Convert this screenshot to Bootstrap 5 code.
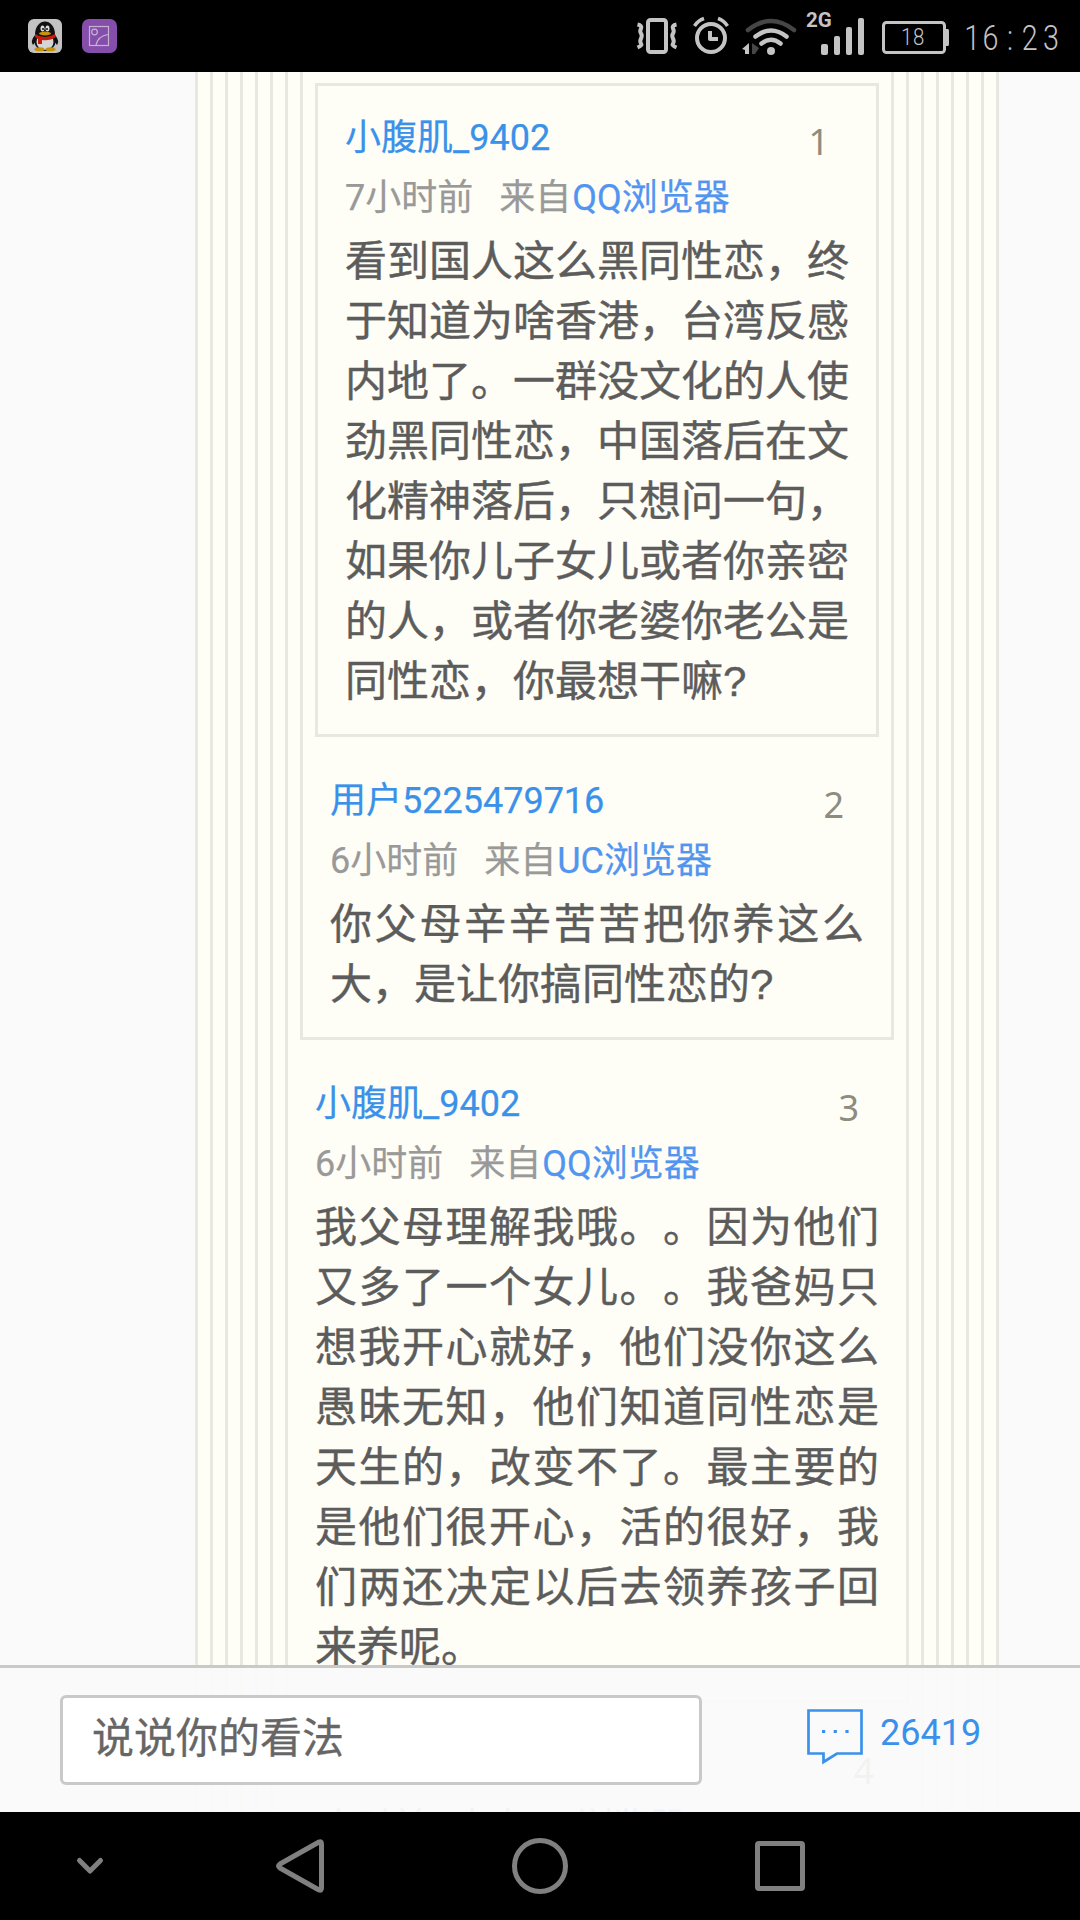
<!DOCTYPE html>
<html lang="zh-CN">
<head>
<meta charset="utf-8">
<meta name="viewport" content="width=device-width, initial-scale=1">
<title>评论</title>
<link href="https://cdn.jsdelivr.net/npm/bootstrap@5.3.0/dist/css/bootstrap.min.css" rel="stylesheet">
<style>
body{width:1080px;height:1920px;overflow:hidden;background:#fafafa;font-family:Roboto,"Noto Sans CJK SC",sans-serif}
svg{display:block;flex:none}
.status-bar{height:72px;padding-left:28px;background:#000}
.thin-text{font-family:Roboto,sans-serif;font-weight:300;fill:#c4c4c4}
.page-area{height:1740px}
.thread{width:804px;margin-left:195px}
.floor{border:solid #e8e8e0;border-width:0 3px 3px;padding:0 12px;background:#fefef6;display:flow-root}
.floor.first-floor{border-top-width:3px;margin-top:11px}
.comment{padding:34px 15px 22px}
.floor.first-floor .comment{padding-top:22px}
.user-name,.meta-line{font-size:36px;line-height:60px}
.user-name{color:#3a91ea;-webkit-text-stroke:.25px}
.meta-line{color:#999;margin-bottom:4px;white-space:nowrap;-webkit-text-stroke:.25px}
.source{color:#5295f0}
.from{margin-left:26px;margin-right:1px}
.floor-no{font-family:"Noto Sans",sans-serif;font-size:36px;line-height:60px;color:#8e8c7e;margin-right:20px;padding-top:4px;height:60px}
.words{font-size:42px;line-height:60px;color:#5c5c5c;text-align:justify;text-spacing-trim:space-all;-webkit-text-stroke:.4px}
.q-mark{font-family:"Liberation Sans",sans-serif}
.reply-bar{height:147px;border-top:3px solid #c9c9c9;background:rgba(250,250,250,.93);padding:27px 0 0 60px}
.reply-box{width:642px;height:90px;border:3px solid #c9c9c9;border-radius:6px;font-size:42px;color:#666;padding:0 30px 4px 29px;background:#fff;-webkit-text-stroke:.3px}
.reply-total{margin:12px 0 0 104px}
.count{font-size:36px;line-height:52px;color:#3a91ea;margin-left:16px}
.nav-keys{height:108px;background:#000}
</style>
<script src="https://cdn.jsdelivr.net/npm/bootstrap@5.3.0/dist/js/bootstrap.bundle.min.js"></script>
</head>
<body class="d-flex flex-column">
<header class="status-bar d-flex flex-shrink-0">
  <svg width="90" height="72" viewBox="28 0 90 72">
    <rect x="28" y="19" width="34" height="34" rx="6" fill="#c3c3c3"/>
    <path d="M35 35Q30 41 33 45L37 40ZM55 35Q60 41 57 45L53 40Z" fill="#111"/>
    <ellipse cx="45" cy="42" rx="10.500" ry="9" fill="#111"/>
    <ellipse cx="45" cy="42" rx="8.500" ry="8" fill="#d5d5d5"/>
    <path d="M35 35C35 17 55 17 55 35L53 38H37Z" fill="#111"/>
    <ellipse cx="39.500" cy="49.300" rx="5" ry="2" fill="#c9920d"/><ellipse cx="50.500" cy="49.300" rx="5" ry="2" fill="#c9920d"/>
    <ellipse cx="42.500" cy="28.500" rx="2" ry="3" fill="#ddd"/><ellipse cx="47.500" cy="28.500" rx="2" ry="3" fill="#ddd"/>
    <circle cx="43" cy="29" r="1" fill="#111"/><circle cx="47" cy="29" r="1" fill="#111"/>
    <path d="M35 34Q45 40 55 34L56 37Q50 41 42 40V44H38V39L35 37Z" fill="#c41b0e"/>
    <ellipse cx="45" cy="33.500" rx="6" ry="1.900" fill="#c9920d"/>
    <rect x="82" y="19" width="35" height="34" rx="7" fill="#854eab"/>
    <g fill="none" stroke="#c6b3d2" stroke-width="1.200"><rect x="89.500" y="26.500" width="19" height="19"/><circle cx="94.500" cy="32" r="2.800"/><path d="M96 45Q98 36 108 34.500"/></g>
  </svg>
  <svg class="ms-auto" width="450" height="72" viewBox="630 0 450 72">
    <g fill="none" stroke="#c4c4c4">
      <rect x="648" y="20" width="18" height="32" rx="2.500" stroke-width="4"/>
      <path d="M637.500 24.500q5 1 3.500 4t0 5t0 5t0 5t-3.500 4M676.500 24.500q-5 1-3.500 4t0 5t0 5t0 5t3.500 4" stroke-width="4"/>
      <circle cx="711" cy="38" r="14" stroke-width="4"/>
      <path d="M710 31V39H718" stroke-width="4" stroke-linejoin="round"/>
      <path d="M694.500 26Q698 20.500 704 18.500M727.500 26Q724 20.500 718 18.500" stroke-width="3.500"/>
      <g stroke-width="4.500" stroke-linecap="round"><path d="M748 30Q771 12 794 30" stroke="#464646"/><path d="M755.500 36.500Q771 24.500 786.500 36.500M761.500 43.500Q771 36 780.500 43.500"/></g>
      <rect x="883.500" y="22.500" width="61" height="30" rx="3" stroke-width="3"/>
    </g>
    <circle cx="771" cy="51" r="4" fill="#c4c4c4"/>
    <path d="M749 43V54H745V50L742 49Z" fill="#c4c4c4"/><path d="M752 43L759 48L755 54H752Z" fill="#464646"/>
    <g fill="#c4c4c4"><rect x="821" y="44" width="7" height="11" rx="2"/><rect x="834" y="36" width="6" height="19" rx="2"/><rect x="846" y="27" width="6" height="28" rx="2"/><rect x="858" y="18" width="6" height="37" rx="2"/><path d="M946 29h2q1 0 1 2v13q0 2-1 2h-2z"/></g>
    <text x="806" y="27" font-family="Roboto" font-weight="700" font-size="20.500" fill="#c4c4c4">2G</text>
    <text class="thin-text" transform="translate(901 45) scale(.85 1)" font-size="24" x="0 14">18</text>
    <text class="thin-text" transform="translate(966 50) scale(.82 1)" font-size="35" x="-2 20 50 68 94">16:23</text>
  </svg>
</header>
<main class="page-area position-relative overflow-hidden flex-shrink-0">
  <div class="thread">
  <div class="floor"><div class="floor"><div class="floor"><div class="floor"><div class="floor"><div class="floor">
    <div class="floor">
      <div class="floor">
        <div class="floor first-floor">
          <article class="comment">
            <div class="d-flex justify-content-between"><span class="user-name">小腹肌_9402</span><span class="floor-no">1</span></div>
            <div class="meta-line">7小时前<span class="from">来自</span><span class="source">QQ浏览器</span></div>
            <div class="words">看到国人这么黑同性恋，终于知道为啥香港，台湾反感内地了。一群没文化的人使劲黑同性恋，中国落后在文化精神落后，只想问一句，如果你儿子女儿或者你亲密的人，或者你老婆你老公是同性恋，你最想干嘛<span class="q-mark">?</span></div>
          </article>
        </div>
        <article class="comment">
          <div class="d-flex justify-content-between"><span class="user-name">用户5225479716</span><span class="floor-no">2</span></div>
          <div class="meta-line">6小时前<span class="from">来自</span><span class="source">UC浏览器</span></div>
          <div class="words">你父母辛辛苦苦把你养这么大，是让你搞同性恋的<span class="q-mark">?</span></div>
        </article>
      </div>
      <article class="comment">
        <div class="d-flex justify-content-between"><span class="user-name">小腹肌_9402</span><span class="floor-no">3</span></div>
        <div class="meta-line">6小时前<span class="from">来自</span><span class="source">QQ浏览器</span></div>
        <div class="words">我父母理解我哦。。因为他们又多了一个女儿。。我爸妈只想我开心就好，他们没你这么愚昧无知，他们知道同性恋是天生的，改变不了。最主要的是他们很开心，活的很好，我们两还决定以后去领养孩子回来养呢。</div>
      </article>
    </div>
    <article class="comment">
      <div class="d-flex justify-content-end"><span class="floor-no">4</span></div>
      <div class="meta-line">6小时前<span class="from">来自</span><span class="source">QQ浏览器</span></div>
    </article>
  </div></div></div></div></div></div>
  </div>
  <form class="reply-bar position-absolute bottom-0 start-0 w-100 d-flex align-items-start">
    <div class="reply-box d-flex align-items-center">说说你的看法</div>
    <div class="reply-total d-flex">
      <svg width="58" height="58" viewBox="0 0 58 58"><path d="M2.500 3.500H55.500V46.500H31L17.500 55V46.500H2.500Z" fill="none" stroke="#3a91ea" stroke-width="2.700"/><path d="M16 24.500h3.200M27.700 24.500h3.200M39.400 24.500h3.200" stroke="#3a91ea" stroke-width="3.200"/></svg>
      <span class="count">26419</span>
    </div>
  </form>
</main>
<nav class="nav-keys flex-shrink-0">
  <svg width="1080" height="108" viewBox="0 1812 1080 108" fill="none" stroke="#808080" stroke-width="5" stroke-linejoin="round" stroke-linecap="round">
    <path d="M79.500 1860.500L90 1871L100.500 1860.500"/>
    <path d="M319 1842Q321.500 1841 321.500 1844V1888Q321.500 1891 319 1890L280 1868Q277 1866 280 1864Z"/>
    <circle cx="540" cy="1866" r="25.500"/>
    <rect x="757.500" y="1843.500" width="45" height="45" rx="1.500"/>
  </svg>
</nav>
</body>
</html>
